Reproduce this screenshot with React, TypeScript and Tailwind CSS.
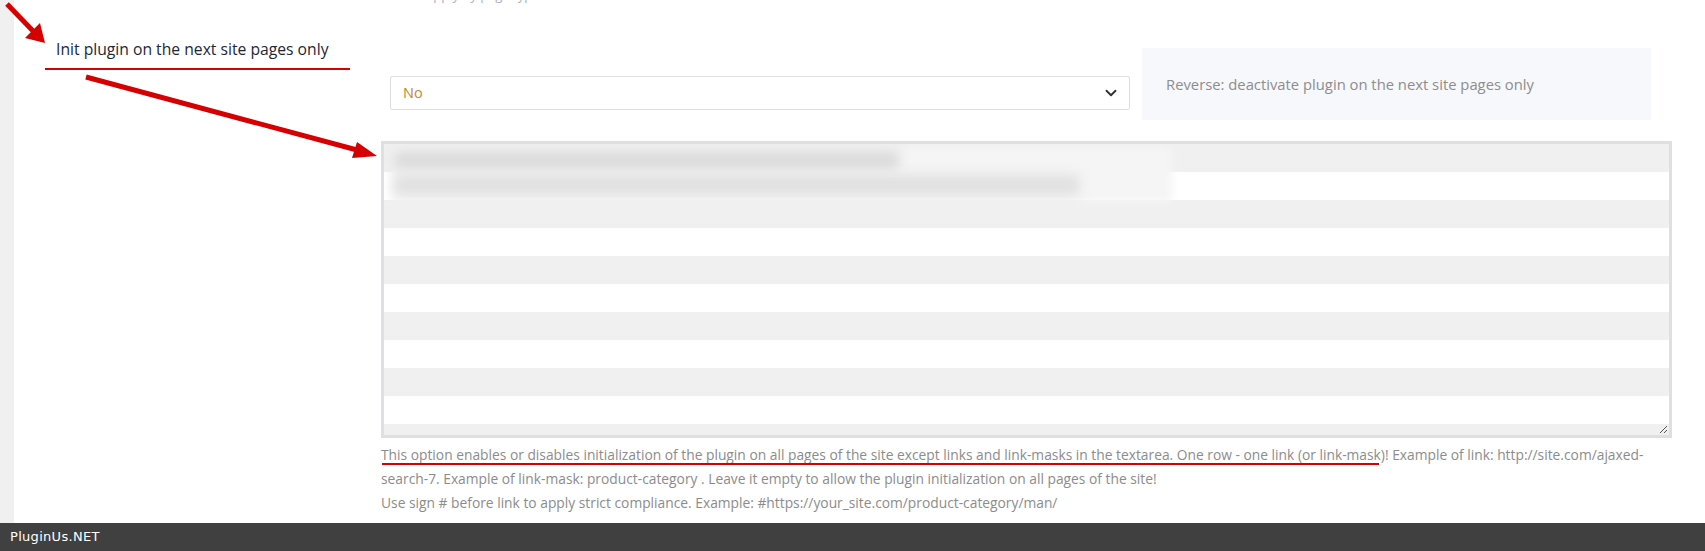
import { ChevronDown } from 'lucide-react';

const rows = Array.from({ length: 11 }, (_, i) => i);

const Annotations = () => (
    <svg className="absolute inset-0 pointer-events-none" width="1705" height="551" viewBox="0 0 1705 551">
        {/* arrow pointing at the label */}
        <line x1="7" y1="4" x2="34" y2="32" stroke="#d60000" strokeWidth="5" />
        <polygon points="45,43 25,38 40,23" fill="#d60000" />
        {/* arrow pointing at the textarea */}
        <line x1="86" y1="77" x2="357" y2="150" stroke="#d60000" strokeWidth="5" />
        <polygon points="377,156 352,158 357,142" fill="#d60000" />
        {/* underlines */}
        <line x1="45" y1="69" x2="350" y2="69" stroke="#d60000" strokeWidth="2" />
        <line x1="382" y1="464" x2="1379" y2="464" stroke="#d60000" strokeWidth="2" />
    </svg>
);

const App = () => {
    return (
        <div className="relative w-[1705px] h-[551px] overflow-hidden bg-white flex flex-col font-['Open_Sans',sans-serif]">
            <div className="flex flex-1 min-h-0">
                <div className="w-[14px] bg-[#f0f0f0]" />

                {/* Label column */}
                <div className="w-[367px] pl-[42px] pt-[39px]">
                    <p className="text-[15.7px] leading-[20px] text-[#1c2738]">Init plugin on the next site pages only</p>
                </div>

                {/* Field column */}
                <div className="w-[1291px] flex flex-col">
                    <div className="h-[48px]">
                        <p className="-mt-[15px] ml-[45px] text-[13px] leading-[20px] text-[#a9b1c0]">apply by page type</p>
                    </div>

                    <div className="flex items-start">
                        <div className="ml-[9px] mt-[28px] w-[740px] h-[34px] border border-[#dcdfe4] rounded-[2px] flex items-center justify-between pl-[12px] pr-[9px]">
                            <span className="text-[14.5px] text-[#c4872a]">No</span>
                            <ChevronDown className="w-[18px] h-[18px] text-[#333]" strokeWidth={2.5} />
                        </div>
                        <div className="ml-[12px] w-[509px] h-[72px] bg-[#f7f8fb] flex items-center pl-[24px]">
                            <span className="text-[14.8px] text-[#8d8d8d]">Reverse: deactivate plugin on the next site pages only</span>
                        </div>
                    </div>

                    {/* Textarea */}
                    <div className="mt-[21px] h-[297px] border-[3px] border-[#dcdfe4] relative overflow-hidden">
                        <div className="flex flex-col">
                            {rows.map((r) => (
                                <div key={r} className={r % 2 === 0 ? 'h-[28px] shrink-0 bg-[#f0f0f0]' : 'h-[28px] shrink-0 bg-white'} />
                            ))}
                        </div>
                        <div className="absolute left-[8px] top-[4px] w-[780px] h-[54px] bg-[#f5f5f5] blur-[4px]" />
                        <div className="absolute left-[10px] top-[7px] w-[505px] h-[18px] bg-[#dadada] blur-[6px]" />
                        <div className="absolute left-[10px] top-[31px] w-[685px] h-[20px] bg-[#e0e0e0] blur-[6px]" />
                        <svg className="absolute right-[1px] bottom-[1px]" width="9" height="9" viewBox="0 0 9 9">
                            <line x1="1" y1="8" x2="8" y2="1" stroke="#555" strokeWidth="1" />
                            <line x1="5" y1="8" x2="8" y2="5" stroke="#555" strokeWidth="1" />
                        </svg>
                    </div>

                    <div className="mt-[5px] text-[13.8px] leading-[24px] text-[#8c8c8c]">
                        <p>
                            This option enables or disables initialization of the plugin on all pages of the site except links and link-masks in the textarea. One row - one link (or link-mask)! Example of link: http://site.com/ajaxed-search-7. Example of link-mask: product-category . Leave it empty to allow the plugin initialization on all pages of the site!
                        </p>
                        <p>Use sign # before link to apply strict compliance. Example: #https://your_site.com/product-category/man/</p>
                    </div>
                </div>
            </div>

            <div className="h-[28px] shrink-0 bg-[#404040] flex items-center pl-[10px]">
                <span className="text-[13px] text-white font-['DejaVu_Sans',sans-serif] tracking-[0.3px]">PluginUs.NET</span>
            </div>

            <Annotations />
        </div>
    );
};

export default App;
